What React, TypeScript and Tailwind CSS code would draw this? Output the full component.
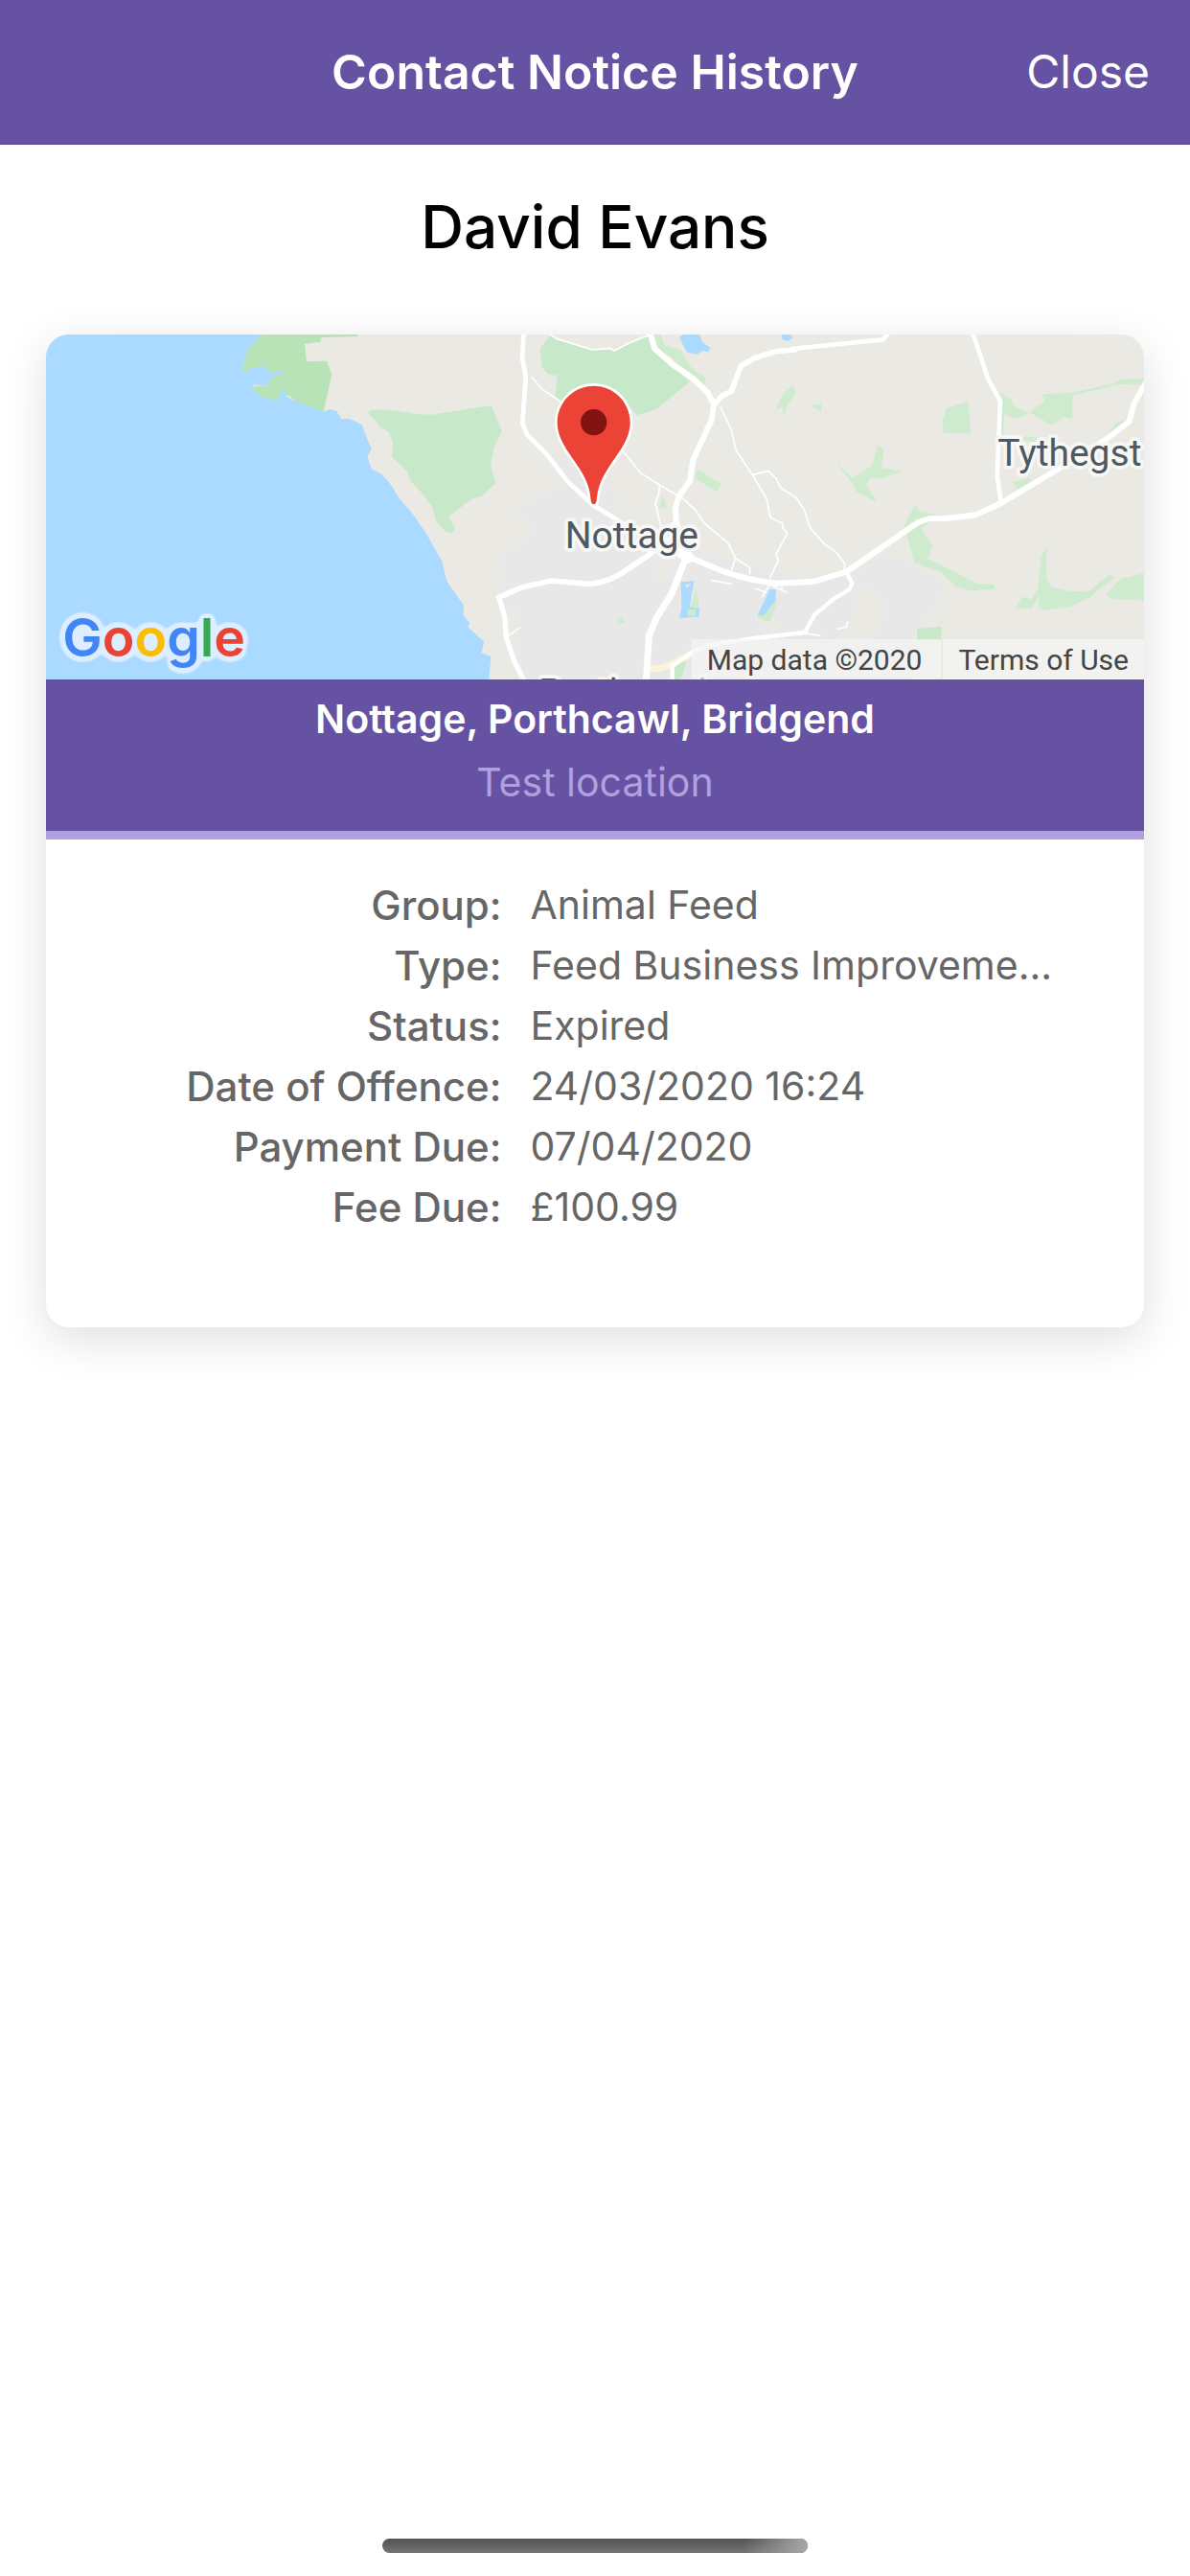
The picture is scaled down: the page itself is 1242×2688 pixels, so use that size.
import React from "react";

const details = [
  { label: "Group:", value: "Animal Feed" },
  { label: "Type:", value: "Feed Business Improveme..." },
  { label: "Status:", value: "Expired" },
  { label: "Date of Offence:", value: "24/03/2020 16:24" },
  { label: "Payment Due:", value: "07/04/2020" },
  { label: "Fee Due:", value: "£100.99" },
];

function MapDrawing() {
  return (
    <svg
      viewBox="24 27 3438 1080"
      preserveAspectRatio="xMidYMid slice"
      className="block size-full font-[Roboto,sans-serif]"
      role="img"
      aria-label="Map of Nottage"
    >
      <defs>
        <filter id="logo-halo" x="-10%" y="-20%" width="120%" height="140%" colorInterpolationFilters="sRGB">
          <feGaussianBlur in="SourceAlpha" stdDeviation="12" result="b" />
          <feComponentTransfer in="b" result="t">
            <feFuncA type="linear" slope="14" intercept="-0.5" />
          </feComponentTransfer>
          <feFlood floodColor="#dceeff" />
          <feComposite in2="t" operator="in" result="h" />
          <feMerge>
            <feMergeNode in="h" />
            <feMergeNode in="SourceGraphic" />
          </feMerge>
        </filter>
      </defs>

      <rect x="0" y="0" width="3500" height="1140" fill="#eae9e4" />

      {/* Built-up areas */}
      <g fill="#e8e8e8">
        <path d="M1605 410 L1700 400 1790 500 1820 590 1880 610 2000 640 2040 700 2420 800 2560 800 2560 1120 1480 1120 1500 900 1440 860 1460 770 1435 720 1540 670 1540 620 1490 580 1600 520 1650 500Z" />
        <path d="M2560 770 L2640 720 2720 730 2850 810 2790 890 2740 960 2740 1110 2300 1110 2300 810Z" />
        <path d="M1520 320 L1545 300 1565 320 1555 350Z" />
      </g>
      <g fill="#eae9e4">
        <path d="M1470 870 L1510 910 1490 960 1470 960Z" />
        <path d="M1925 700 L2000 720 1960 810 1930 790Z" />
        <path d="M2565 810 L2640 830 2650 920 2610 980 2500 980 2560 890Z" />
        <path d="M2270 900 L2340 830 2350 780 2300 900 2330 960 2260 950Z" />
      </g>

      {/* Sea */}
      <path
        fill="#aadaff"
        d="M0 0 H720 L700 27 655 75 636 138 662 142 665 132 705 126 728 147 775 140 775 146 738 158 712 188 672 184 674 200 705 226 750 232 758 203 772 203 774 218 800 235 893 267 913 262 934 267 950 292 972 290 1013 309 1028 350 1043 385 1030 410 1043 447 1075 465 1100 492 1130 540 1170 586 1215 650 1264 738 1278 798 1332 875 1331 907 1351 930 1345 943 1396 990 1387 1024 1417 1035 1410 1120 H0Z"
      />

      {/* Woodland and parks */}
      <path
        fill="#b7e3b6"
        d="M700 27 L655 75 636 138 662 142 665 132 705 126 728 147 775 140 775 146 738 158 712 188 672 188 674 202 705 226 750 232 758 203 772 203 774 218 788 220 803 236 893 267 919 152 903 110 840 112 834 57 884 50 886 37 1000 33 1000 27Z"
      />
      <g fill="#c8e9c9">
        <path d="M1032 273 L1045 262 1130 266 1180 276 1230 278 1418 249 1452 330 1428 378 1416 437 1432 492 1390 532 1357 542 1285 596 1305 635 1295 648 1275 645 1245 610 1235 570 1200 523 1165 485 1155 455 1107 412 1110 365 1095 330 1070 318 1057 298Z" />
        <path d="M1605 27 L1575 65 1570 75 1578 132 1600 153 1625 155 1618 225 1640 240 1840 240 1875 280 1935 262 2040 175 1930 80 1910 32 1805 76 1740 75 1620 38Z" />
        <path d="M1992 1070 L2010 1050 2030 1053 2010 1110 1992 1110Z" />
        <path d="M2751 948 L2828 941 2828 985 2751 985Z" />
      </g>
      <g fill="#ceeccd">
        <path d="M1925 27 H1950 L1960 60 2010 75 2045 130 2090 165 2085 185 2030 165 1985 100 1945 80Z" />
        <path d="M2062 448 L2138 495 2123 518 2055 478Z" />
        <path d="M1955 530 L1968 572 1945 570Z" />
        <path d="M2310 260 L2330 215 2360 187 2373 208 2347 245 2333 286 2328 255Z" />
        <path d="M2418 250 L2452 243 2452 270Z" />
        <path d="M2830 300 L2844 258 2912 237 2919 338 2834 335Z" />
        <path d="M2498 426 L2550 477 2612 436 2627 374 2647 384 2640 444 2703 456 2640 478 2607 475 2593 497 2625 552 2558 517 2555 500 2545 490Z" />
        <path d="M2711 625 L2745 560 2757 578 2826 594 2765 634 2800 690 2784 728 2880 775 2940 808 2994 810 2994 825 2920 829 2873 816 2825 772 2743 742Z" />
        <path d="M3008 206 L3045 230 3053 250 3102 275 3060 292 3025 275 3022 340 3010 340Z" />
        <path d="M3104 272 L3153 232 3140 214 3235 210 3370 180 3390 167 3462 165 3455 185 3390 182 3238 218 3237 292 3212 285 3172 311 3140 292Z" />
        <path d="M3070 352 L3130 345 3120 365Z" />
        <path d="M3350 335 L3375 305 3415 290 3360 345Z" />
        <path d="M3052 490 L3105 475 3110 495 3070 515Z" />
        <path d="M3156 695 L3157 790 3172 818 3232 831 3290 830 3352 780 3376 785 3320 825 3295 850 3230 878 3148 892 3132 882 3133 845 3110 884 3061 884 3080 848 3110 856 3130 825 3140 720Z" />
        <path d="M3344 838 L3388 792 3480 770 3480 860 3357 855Z" />
        <path d="M2060 822 L2070 880 2043 880Z" />
        <path d="M1828 908 L1838 930 1810 932Z" />
        <path d="M2285 858 L2315 860 2290 928 2250 912Z" />
      </g>

      {/* Ponds */}
      <g fill="#aadaff">
        <path d="M2007 35 L2020 27 2070 27 2080 52 2104 68 2098 82 2080 78 2062 90 2030 82Z" />
        <path d="M2329 27 H2355 L2362 38 2345 48 2329 42Z" />
        <path d="M2012 802 L2054 798 2044 850 2040 880 2070 884 2068 910 2008 915 2014 880Z" />
        <path d="M2290 824 L2310 826 2308 860 2272 905 2252 905 2270 868Z" />
      </g>
      <path fill="#ceeccd" d="M2032 890 L2060 886 2058 906 2032 908Z" />
      <path fill="#eae9e4" d="M2022 812 L2046 808 2030 820Z" />

      {/* Beach road */}
      <path d="M1912 1074 C1975 1075 1990 1050 2050 1025" fill="none" stroke="#fdf3da" strokeWidth="20" />

      {/* Lanes */}
      <g fill="none" stroke="#fff" strokeWidth="5" strokeLinejoin="round">
        <path d="M1545 160 L1575 197 1640 240" />
        <path d="M1825 385 L1885 460 1945 498 2020 542 2060 580 2085 618 2160 680 2183 728 2170 765 M2183 728 L2228 757 2228 778" />
        <path d="M1945 498 L1943 525 1932 555 1950 630" />
        <path d="M2135 252 L2170 325 2185 390 2235 465 2280 540 2292 600 2330 618 2330 632 2345 650 2310 715 2317 735 2290 790" />
        <path d="M2237 466 L2285 455 2310 478 2325 507 2375 540 2400 580 2415 630 2460 682 2500 710 2525 745 2524 770" />
        <path d="M1603 27 L1622 40 1735 75 1790 70 1804 78 1850 53 1910 30" />
        <path d="M2105 796 L2172 808 M2245 822 L2280 835 M2265 850 L2290 810 2345 835 M2330 810 L2325 830" />
        <path d="M1472 970 L1510 944 M2500 950 L2530 942 2535 925 M2400 962 L2450 970" />
      </g>

      {/* Main roads */}
      <g fill="none" stroke="#fff" strokeLinejoin="round" strokeLinecap="round">
        <path strokeWidth="14" d="M1520 20 L1515 100 1526 160 1516 305 1530 340 1590 400 1660 490 1738 562 1870 642" />
        <path strokeWidth="18" d="M1915 20 L1930 72 1985 120 2050 165 2095 208 2115 245 2108 295 2050 420 2040 485 2005 535 1995 570 1997 610 2030 720" />
        <path strokeWidth="17" d="M2115 248 L2140 220 2170 205 2200 125 2245 100 2310 80 2370 75" />
        <path strokeWidth="14" d="M2360 72 L2645 43 2662 22" />
        <path strokeWidth="18" d="M2030 720 C2130 765 2200 795 2310 806 L2430 800 2530 770 2755 615 2792 603 2840 603 2935 592 3015 555 3190 450 3340 358 3415 300 3432 240 3470 175" />
        <path strokeWidth="14" d="M2925 20 L2975 170 3012 235 3002 470 3014 552" />
        <path strokeWidth="17" d="M1995 655 L1915 715 1830 772 C1790 795 1765 805 1725 808 L1605 798 1510 820 1442 850" />
        <path strokeWidth="16" d="M1442 850 L1460 910 1465 975 1490 1050 1520 1110" />
        <path strokeWidth="21" d="M2028 725 L1985 835 1935 915 1912 970 1903 1115" />
        <path strokeWidth="36" d="M2015 710 L2035 725" />
        <path strokeWidth="13" d="M1985 1110 V1065 L2050 1020 2100 1000 2240 978 2400 960 2430 905 2490 855 2540 825 2548 805 2530 770" />
        <path strokeWidth="12" d="M1950 640 L2000 615" />
      </g>

      {/* Place names */}
      <g
        fill="#4f5961"
        stroke="#f7f7f6"
        strokeWidth="22"
        strokeLinejoin="round"
        fontSize="117"
        style={{ paintOrder: "stroke" }}
      >
        <text x="1649" y="697">Nottage</text>
        <text x="3004" y="437">Tythegst</text>
        <text x="1567" y="1187">Porthcawl</text>
      </g>

      {/* Location pin */}
      <path
        d="M1739 188 C1676 188 1625 239 1625 302 C1625 358 1665 400 1694 446 C1717 483 1726 505 1730 545 C1731 563 1747 563 1748 545 C1752 505 1761 483 1784 446 C1813 400 1853 358 1853 302 C1853 239 1802 188 1739 188Z"
        fill="#eb4335"
        stroke="#fff"
        strokeWidth="16"
        style={{ paintOrder: "stroke" }}
      />
      <circle cx="1739" cy="302" r="41" fill="#811411" />

      {/* Map provider logo */}
      <text
        x="76"
        y="1035"
        fontSize="166"
        filter="url(#logo-halo)"
        className="font-[Inter,sans-serif] font-semibold"
      >
        <tspan fill="#4285f4">G</tspan>
        <tspan fill="#ea4335">o</tspan>
        <tspan fill="#fbbc05">o</tspan>
        <tspan fill="#4285f4">g</tspan>
        <tspan fill="#34a853">l</tspan>
        <tspan fill="#ea4335">e</tspan>
      </text>
    </svg>
  );
}

function NoticeCard() {
  return (
    <article className="overflow-hidden rounded-3xl bg-white shadow-[0_12px_48px_rgba(0,0,0,0.13)]">
      <div className="relative aspect-[1146/360] w-full">
        <MapDrawing />
        <div className="absolute right-0 bottom-0 flex gap-[2px] font-[Roboto,sans-serif] text-[30px] leading-10 text-[#444]">
          <span className="bg-[#f5f5f5]/70 pt-0.5 pr-5 pl-4">Map data ©2020</span>
          <a href="#terms" className="bg-[#f5f5f5]/70 px-4 pt-0.5">
            Terms of Use
          </a>
        </div>
      </div>
      <div className="border-b-[9px] border-[#b19fe0] bg-[#6652a2] px-6 pt-2 pb-[18px] text-center text-[41px] leading-[66px]">
        <h2 className="font-semibold text-white">Nottage, Porthcawl, Bridgend</h2>
        <p className="text-[#b19fe0]">Test location</p>
      </div>
      <dl className="pt-[37px] pb-[94px] text-[41px] leading-[63px] text-[#666]">
        {details.map((row) => (
          <div key={row.label} className="grid grid-cols-[5fr_7fr]">
            <dt className="pr-0.5 text-right text-[42px] font-medium">{row.label}</dt>
            <dd className="truncate pr-20 pl-7">{row.value}</dd>
          </div>
        ))}
      </dl>
    </article>
  );
}

export default function App() {
  return (
    <div className="flex min-h-screen flex-col bg-white font-[Inter,sans-serif]">
      <header className="grid h-[151px] grid-cols-[1fr_auto_1fr] items-center border-b border-[#5b4790] bg-[#6652a2] px-[42px] text-white">
        <h1 className="col-start-2 text-[50px] font-semibold">Contact Notice History</h1>
        <button type="button" className="justify-self-end text-[48px]">
          Close
        </button>
      </header>
      <main className="flex-1 px-12">
        <p className="pt-[46px] pb-[72px] text-center text-[62px] leading-[80px] font-medium text-black">David Evans</p>
        <NoticeCard />
      </main>
      <div className="mb-6 h-[15px] w-[444px] self-center rounded-full bg-linear-to-b from-[#525252] to-[#757575]">
        <div className="h-full rounded-full bg-linear-to-r from-transparent from-85% to-[#a8a8a8]" />
      </div>
    </div>
  );
}
